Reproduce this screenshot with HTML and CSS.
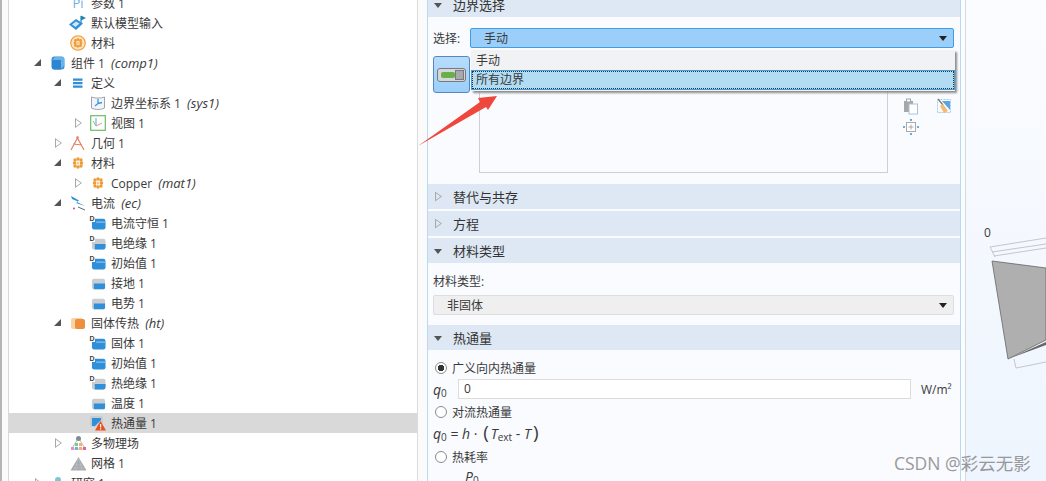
FILE: index.html
```html
<!DOCTYPE html>
<html lang="zh">
<head>
<meta charset="utf-8">
<title>COMSOL</title>
<link rel="stylesheet" href="styles.css">
</head>
<body>
<svg class="defs" width="0" height="0">
  <symbol id="i-dom" viewBox="0 0 16 16">
    <rect x="1" y="3" width="14" height="11" rx="2" fill="#c9ccd1"/>
    <path d="M3 8h12v4.500a1.500 1.500 0 0 1-1.500 1.500H3z" fill="#2f8fd8"/>
  </symbol>
  <symbol id="i-domb" viewBox="0 0 16 16">
    <rect x="1" y="3" width="14.500" height="11.500" rx="2.500" fill="#2f8fd8"/>
    <path d="M5.500 6h10v1H5.500z" fill="#a9d3f2"/>
  </symbol>
  <symbol id="i-domg" viewBox="0 0 16 16">
    <rect x="1" y="3" width="14.500" height="11.500" rx="2.500" fill="#c9ccd1"/>
    <path d="M4 8.500h11.500v3.500a2.500 2.500 0 0 1-2.500 2.500H4z" fill="#2f8fd8"/>
  </symbol>
  <symbol id="i-flower" viewBox="0 0 12 12">
    <g fill="#ee9a35">
      <circle cx="3" cy="3" r="1.700"/><circle cx="6" cy="2" r="1.700"/><circle cx="9" cy="3" r="1.700"/>
      <circle cx="2.500" cy="6" r="1.700"/><circle cx="9.500" cy="6" r="1.700"/>
      <circle cx="3" cy="9" r="1.700"/><circle cx="6" cy="10" r="1.700"/><circle cx="9" cy="9" r="1.700"/>
    </g>
    <circle cx="6" cy="6" r="1.500" fill="#f7c98c"/>
  </symbol>
</svg>

<main class="app">
  <div class="strip"></div>

  <nav class="tree">
    <div class="row l2"><span class="tw"></span><span class="ic pi">Pi</span><span>参数 1</span></div>
    <div class="row l2"><span class="tw"></span><span class="ic"><svg width="18" height="16" viewBox="0 0 18 16"><path d="M0 9.500L7 4l7 4.500L7 15z" fill="#2f8fd8"/><path d="M3 9.500L7 6.500l3.500 2L6.500 12z" fill="#cfe6f7"/><path d="M12 1v7" stroke="#2f8fd8" stroke-width="1.300"/><path d="M12 .5l5 2.500-5 2.500z" fill="#1f86a8"/></svg></span><span>默认模型输入</span></div>
    <div class="row l2"><span class="tw"></span><span class="ic"><svg width="16" height="16" viewBox="0 0 16 16"><circle cx="8" cy="8" r="7.300" fill="#fde2c1" stroke="#ee9a35" stroke-width="1.100"/><svg x="3" y="3" width="10" height="10" viewBox="0 0 12 12"><use href="#i-flower"/></svg></svg></span><span>材料</span></div>
    <div class="row l1"><span class="tw open"></span><span class="ic"><svg width="14" height="14" viewBox="0 0 14 14"><rect x=".5" y=".5" width="13" height="13" rx="3" fill="#2f8fd8"/><path d="M1 4l3-3h9v9l-3 3V4z" fill="#6cb2e6"/><path d="M1 4h9v9.500H3.500A2.500 2.500 0 0 1 1 11z" fill="#2f86d0"/></svg></span><span>组件 1 <i>(comp1)</i></span></div>
    <div class="row l2"><span class="tw open"></span><span class="ic"><svg width="12" height="12" viewBox="0 0 12 12"><path d="M1 1.500h9.500v2.200H1zM1 5h9.500v2.200H1zM1 8.500h9.500v2.200H1z" fill="#2f8fd8"/></svg></span><span>定义</span></div>
    <div class="row l3"><span class="tw"></span><span class="ic"><svg width="16" height="16" viewBox="0 0 16 16"><path d="M1.500 2c4 1.500 9 1.500 13 0v11c-4 2-9 2-13 0z" fill="#f2f4f7" stroke="#9aa5b1"/><path d="M5 11l3-2.500V4M8 8.500l4-1" fill="none" stroke="#3f97db" stroke-width="1.300"/></svg></span><span>边界坐标系 1 <i>(sys1)</i></span></div>
    <div class="row l3"><span class="tw closed"></span><span class="ic"><svg width="16" height="16" viewBox="0 0 16 16"><rect x=".7" y=".7" width="14.600" height="14.600" fill="#fff" stroke="#6dbb63" stroke-width="1.200"/><path d="M6 3v8" stroke="#5aa5e0"/><path d="M6 11l-3-5" stroke="#7ecb8d"/><path d="M6 11l6-3" stroke="#e88f8f"/></svg></span><span>视图 1</span></div>
    <div class="row l2"><span class="tw closed"></span><span class="ic"><svg width="16" height="16" viewBox="0 0 16 16"><path d="M1 15L7.500 3 14 15M3 9l9 1" fill="none" stroke="#e57f69" stroke-width="1.200"/><circle cx="7.500" cy="2.500" r="1.300" fill="#e57f69"/></svg></span><span>几何 1</span></div>
    <div class="row l2"><span class="tw open"></span><span class="ic"><svg width="12" height="12"><use href="#i-flower"/></svg></span><span>材料</span></div>
    <div class="row l3"><span class="tw closed"></span><span class="ic"><svg width="12" height="12"><use href="#i-flower"/></svg></span><span>Copper <i>(mat1)</i></span></div>
    <div class="row l2"><span class="tw open"></span><span class="ic"><svg width="16" height="16" viewBox="0 0 16 16"><path d="M1 1l8 4.500-2 1.500 8 4-9-3 2-1.500L2 4z" fill="#2f8fd8"/><path d="M8 12l7 3" stroke="#5a6a7a"/><circle cx="4" cy="13.500" r="1" fill="#e0457b"/></svg></span><span>电流 <i>(ec)</i></span></div>
    <div class="row l3"><span class="tw"></span><span class="ic dee"><svg width="15" height="15"><use href="#i-domb"/></svg></span><span>电流守恒 1</span></div>
    <div class="row l3"><span class="tw"></span><span class="ic dee"><svg width="15" height="15"><use href="#i-domg"/></svg></span><span>电绝缘 1</span></div>
    <div class="row l3"><span class="tw"></span><span class="ic dee"><svg width="15" height="15"><use href="#i-domb"/></svg></span><span>初始值 1</span></div>
    <div class="row l3"><span class="tw"></span><span class="ic"><svg width="15" height="15"><use href="#i-dom"/></svg></span><span>接地 1</span></div>
    <div class="row l3"><span class="tw"></span><span class="ic"><svg width="15" height="15"><use href="#i-dom"/></svg></span><span>电势 1</span></div>
    <div class="row l2"><span class="tw open"></span><span class="ic"><svg width="16" height="14" viewBox="0 0 16 14"><rect x="1" y="2" width="12" height="11" rx="2" fill="#f9d2a8"/><rect x="5" y="3" width="10" height="10" rx="2" fill="#ee8f3c"/></svg></span><span>固体传热 <i>(ht)</i></span></div>
    <div class="row l3"><span class="tw"></span><span class="ic dee"><svg width="15" height="15"><use href="#i-domb"/></svg></span><span>固体 1</span></div>
    <div class="row l3"><span class="tw"></span><span class="ic dee"><svg width="15" height="15"><use href="#i-domb"/></svg></span><span>初始值 1</span></div>
    <div class="row l3"><span class="tw"></span><span class="ic dee"><svg width="15" height="15"><use href="#i-domg"/></svg></span><span>热绝缘 1</span></div>
    <div class="row l3"><span class="tw"></span><span class="ic"><svg width="15" height="15"><use href="#i-dom"/></svg></span><span>温度 1</span></div>
    <div class="row l3 sel"><span class="tw"></span><span class="ic"><svg width="16" height="16" viewBox="0 0 16 16"><rect x="0" y="1" width="13" height="11" rx="2" fill="#c9ccd1"/><path d="M2 3h9v2l-6 6H2z" fill="#2f8fd8"/><path d="M10.500 6L16 15.500H5z" fill="#e8501f"/><path d="M10 9h1.200v3.500H10zM10 13.200h1.200v1.200H10z" fill="#fff"/></svg></span><span>热通量 1</span></div>
    <div class="row l2"><span class="tw closed"></span><span class="ic"><svg width="17" height="16" viewBox="0 0 17 16"><path d="M8.500 3L1.500 14h14z" fill="none" stroke="#b9bec4"/><circle cx="8.500" cy="3.500" r="2.500" fill="#7f8c96"/><rect x="5" y="8" width="3" height="3" fill="#7ecb8d"/><rect x="9" y="8" width="3" height="3" fill="#f0b46c"/><rect x="1" y="12" width="3" height="3" fill="#e98fc8"/><rect x="5" y="12" width="3" height="3" fill="#6cb2e6"/><rect x="9" y="12" width="3" height="3" fill="#f0b46c"/><rect x="13" y="12" width="3" height="3" fill="#e95fa8"/></svg></span><span>多物理场</span></div>
    <div class="row l2"><span class="tw"></span><span class="ic"><svg width="17" height="15" viewBox="0 0 17 15"><path d="M8.500 1L16.500 14.500H.5z" fill="#a6a9ad"/><path d="M5 9h7M3 12h11M8.500 1L5 14M8.500 1l3.500 13" stroke="#c4c7ca" stroke-width=".6"/></svg></span><span>网格 1</span></div>
    <div class="row l1"><span class="tw closed"></span><span class="ic"><svg width="14" height="14" viewBox="0 0 14 14"><circle cx="7" cy="4" r="3" fill="#7fc4d8"/></svg></span><span>研究 1</span></div>
  </nav>

  <div class="gutter"></div>

  <section class="panel">
    <h2 class="head first"><span class="tw open dark"></span>边界选择</h2>
    <div class="sel-row">
      <label class="lab">选择:</label>
      <div class="combo active"><span>手动</span><span class="caret"></span></div>
    </div>
    <div class="list-row">
      <button class="toggle" type="button"><span class="track"><span class="fill"></span><span class="knob"></span></span></button>
      <div class="list"></div>
      <div class="tools">
        <svg width="16" height="17" viewBox="0 0 16 17"><rect x="1" y="3" width="9" height="11" fill="#a5a7aa"/><rect x="3.500" y="1" width="4" height="3" fill="#fff" stroke="#a5a7aa"/><rect x="6" y="6" width="8.500" height="10" fill="#fff" stroke="#a9c2de"/></svg>
        <svg width="15" height="16" viewBox="0 0 15 16"><rect x=".5" y="1.500" width="13" height="13" fill="none" stroke="#9fcbed" stroke-dasharray="2 1"/><path d="M5 3h8v9z" fill="#5aa5e0"/><path d="M1 1l5 6" stroke="#777" stroke-width="1.200"/><path d="M3 8l3-2 5 7-4 2z" fill="#f2ba72"/></svg>
        <svg width="16" height="16" viewBox="0 0 16 16"><rect x="3.500" y="3.500" width="9" height="9" fill="#fff" stroke="#aaa"/><path d="M8 5.500v5M5.500 8h5" stroke="#999" stroke-width=".8"/><g fill="#4ba0df"><circle cx="8" cy="1" r="1.100"/><circle cx="8" cy="15" r="1.100"/><circle cx="1" cy="8" r="1.100"/><circle cx="15" cy="8" r="1.100"/></g></svg>
      </div>
    </div>
    <h2 class="head"><span class="tw closed"></span>替代与共存</h2>
    <h2 class="head"><span class="tw closed"></span>方程</h2>
    <h2 class="head"><span class="tw open dark"></span>材料类型</h2>
    <div class="body">
      <div class="lab stacked">材料类型:</div>
      <div class="combo plain"><span>非固体</span><span class="caret"></span></div>
    </div>
    <h2 class="head"><span class="tw open dark"></span>热通量</h2>
    <div class="flux">
      <div class="radio-row"><span class="radio on"></span>广义向内热通量</div>
      <div class="q-row"><span class="math"><i>q</i><sub>0</sub></span><span class="input">0</span><span class="unit">W/m²</span></div>
      <div class="radio-row"><span class="radio"></span>对流热通量</div>
      <div class="math eq"><i>q</i><sub>0</sub> = <i>h</i> · <span class="paren">(</span><i>T</i><sub>ext</sub> - <i>T</i><span class="paren">)</span></div>
      <div class="radio-row"><span class="radio"></span>热耗率</div>
      <div class="math p0"><i>P</i><sub>0</sub></div>
    </div>

    <div class="dropdown">
      <div class="opt">手动</div>
      <div class="opt hi">所有边界</div>
    </div>
  </section>

  <div class="splitter"></div>

  <figure class="graphics">
    <span class="tick">0</span>
    <svg width="80" height="481" viewBox="966 0 80 481">
      <path d="M990 247l56-9M992 252l54-8M994 256l52-8M990 247l5 10" fill="none" stroke="#b6babf" stroke-width=".8"/>
      <path d="M1014 359l2 9 30-6" fill="none" stroke="#b6babf" stroke-width=".8"/>
      <path d="M992 261l54 7v72l-38 19z" fill="#afafaf" stroke="#666" stroke-width=".8"/>
      <path d="M1008 359l38-17v3z" fill="#666"/>
    </svg>
  </figure>
</main>

<svg class="arrow" width="84" height="56" viewBox="416 94 84 56"><path d="M418 146L480 102 478 98 497 96 488 110 486 107z" fill="#f0473c"/></svg>
<div class="mark">CSDN @彩云无影</div>
</body>
</html>
```
FILE: styles.css
```css
* { box-sizing: border-box; }
html, body { margin: 0; height: 481px; overflow: hidden; background: #fff; }
body {
  position: relative;
  font-family: "Open Sans", "Noto Sans CJK SC", sans-serif;
  font-size: 12px;
  color: #3a3a3a;
}
.defs { position: absolute; }
.app { display: flex; width: 1046px; height: 481px; overflow: hidden; }

.strip { width: 9px; flex: none; background: #fbfbfb; border-left: 2px solid #b5b5b5; border-right: 1px solid #d8d8d8; }

.tree { width: 408px; flex: none; margin-top: -7px; background: #fff; }
.row { display: flex; align-items: center; height: 20px; white-space: nowrap; }
.row i { margin-left: 3px; font-size: 13px; }
.l1 { padding-left: 22px; }
.l2 { padding-left: 42px; }
.l3 { padding-left: 62px; }
.sel { background: #d9d9d9; }
.tw { width: 14px; height: 20px; flex: none; position: relative; display: inline-block; }
.tw.open::before {
  content: ""; position: absolute; left: 3px; top: 6px;
  border-style: solid; border-width: 0 0 7px 7px;
  border-color: transparent transparent #555 transparent;
}
.tw.closed::before {
  content: ""; position: absolute; left: 4px; top: 5px; width: 7px; height: 10px;
  background: #a8a8a8;
  clip-path: polygon(0 0, 100% 50%, 0 100%, 0 0, 15% 18%, 15% 82%, 80% 50%, 15% 18%);
}
.ic { width: 26px; height: 20px; flex: none; display: flex; align-items: center; justify-content: center; position: relative; }
.dee::before {
  content: "D"; position: absolute; left: 4px; top: 2px; width: 6px; height: 7px;
  background: #fff; color: #444;
  font: 700 7px/7px "Liberation Sans", sans-serif; text-align: center;
}
.dee svg { position: relative; }
.dee::before { z-index: 1; }
.pi { color: #74aedd; font-size: 13px; }

.gutter { width: 11px; flex: none; background: #fbfbfb; border-left: 1px solid #dcdcdc; border-right: 1px solid #b9d9f3; }

.panel { width: 533px; flex: none; position: relative; background: #f9fbff; border-right: 1px solid #b9d9f3; }
.head {
  display: flex; align-items: center; margin: 0 0 2px; height: 25px;
  padding-left: 3px; background: #dee8f4;
  font-size: 13px; font-weight: 400; color: #333;
}
.head.first { margin: -8px 0 0; }
.head .tw { width: 22px; }
.head .tw.open::before {
  left: 3px; top: 8px; border-width: 5px 4.5px 0 4.5px;
  border-color: #555 transparent transparent transparent;
}
.head .tw.closed::before { left: 4px; }

.sel-row { display: flex; align-items: center; height: 20px; margin: 11px 6px 0 5px; }
.lab { width: 37px; flex: none; }
.combo {
  flex: 1; height: 20px; display: flex; align-items: center; justify-content: space-between;
  padding: 0 6px 0 13px; border-radius: 2px;
}
.combo.active { background: #9bcffa; border: 1px solid #3e9fe4; }
.combo.plain { background: #efefef; border: 1px solid #dedede; margin: 5px 0 0; }
.caret { width: 0; height: 0; border-style: solid; border-width: 5px 4px 0; border-color: #222 transparent transparent; }

.list-row { display: flex; height: 128px; margin-top: 8px; padding-left: 5px; }
.toggle {
  width: 37px; height: 37px; flex: none; padding: 0; display: flex; align-items: center; justify-content: center;
  background: linear-gradient(#b7dcfb, #9bcffa); border: 1px solid #5b86bb; border-radius: 3px;
}
.track { width: 29px; height: 14px; display: flex; align-items: center; justify-content: space-between; padding: 0 1px 0 3px; background: #d5d7d9; border: 1px solid #77797c; border-radius: 3px; }
.fill { width: 14px; height: 6px; background: #69b04b; border-radius: 2px; }
.knob { width: 9px; height: 10px; background: #a7a9ac; border: 1px solid #77797c; }
.list { width: 409px; height: 117px; margin-left: 9px; background: #f9fbff; border: 1px solid #cfcfcf; border-top: 0; }
.tools { width: 58px; padding: 42px 4px 0 15px; display: grid; grid-template-columns: 16px 15px; column-gap: 18px; row-gap: 4px; align-content: start; }

.body { padding: 9px 6px 10px 5px; }
.stacked { width: auto; line-height: 16px; }

.flux { padding: 7px 6px 0 7px; }
.radio-row { display: flex; align-items: center; gap: 5px; height: 18px; }
.radio { width: 12px; height: 12px; flex: none; border: 1px solid #8b8b8b; border-radius: 50%; background: #fff; }
.radio.on { background: radial-gradient(circle, #333 0 3px, #fff 3.500px); }
.q-row { display: flex; align-items: center; height: 20px; margin: 2px 0 4px -2px; }
.q-row .math { width: 25px; flex: none; }
.input { width: 453px; height: 20px; padding-left: 5px; line-height: 18px; background: #fff; border: 1px solid #dcdcdc; }
.unit { margin-left: 10px; white-space: nowrap; }
.math { font-size: 14px; }
.math sub { font-size: 10px; line-height: 0; vertical-align: -2px; }
.paren { font-size: 19px; line-height: 0; margin: 0 2px; }
.eq { margin: 4px 0 5px -2px; line-height: 18px; white-space: nowrap; }
.p0 { padding-left: 30px; line-height: 18px; margin-top: 2px; }

.dropdown {
  position: absolute; left: 43px; top: 50px; width: 484px; height: 41px;
  background: #f1f2f4; box-shadow: 2px 2px 2px #8c8c8c;
}
.opt { height: 20px; line-height: 21px; padding-left: 5px; }
.opt.hi {
  height: 20px; line-height: 18px; padding-left: 4px; background: #b2dcf2;
  border: 1px solid #3e9fe4; outline: 1px dotted #333; outline-offset: -2px;
}

.splitter { width: 5px; flex: none; background: #fbfcff; border-right: 1px solid #d5d8dc; }
.graphics { flex: 1; margin: 0; position: relative; background: linear-gradient(#fbfcff, #eef5fe); overflow: hidden; }
.graphics svg { display: block; }
.tick { position: absolute; left: 18px; top: 224px; }

.arrow { position: absolute; left: 416px; top: 94px; }
.mark { position: absolute; left: 894px; top: 450px; font-size: 17.5px; color: #8f8f8f; opacity: .9; white-space: nowrap; }
```
